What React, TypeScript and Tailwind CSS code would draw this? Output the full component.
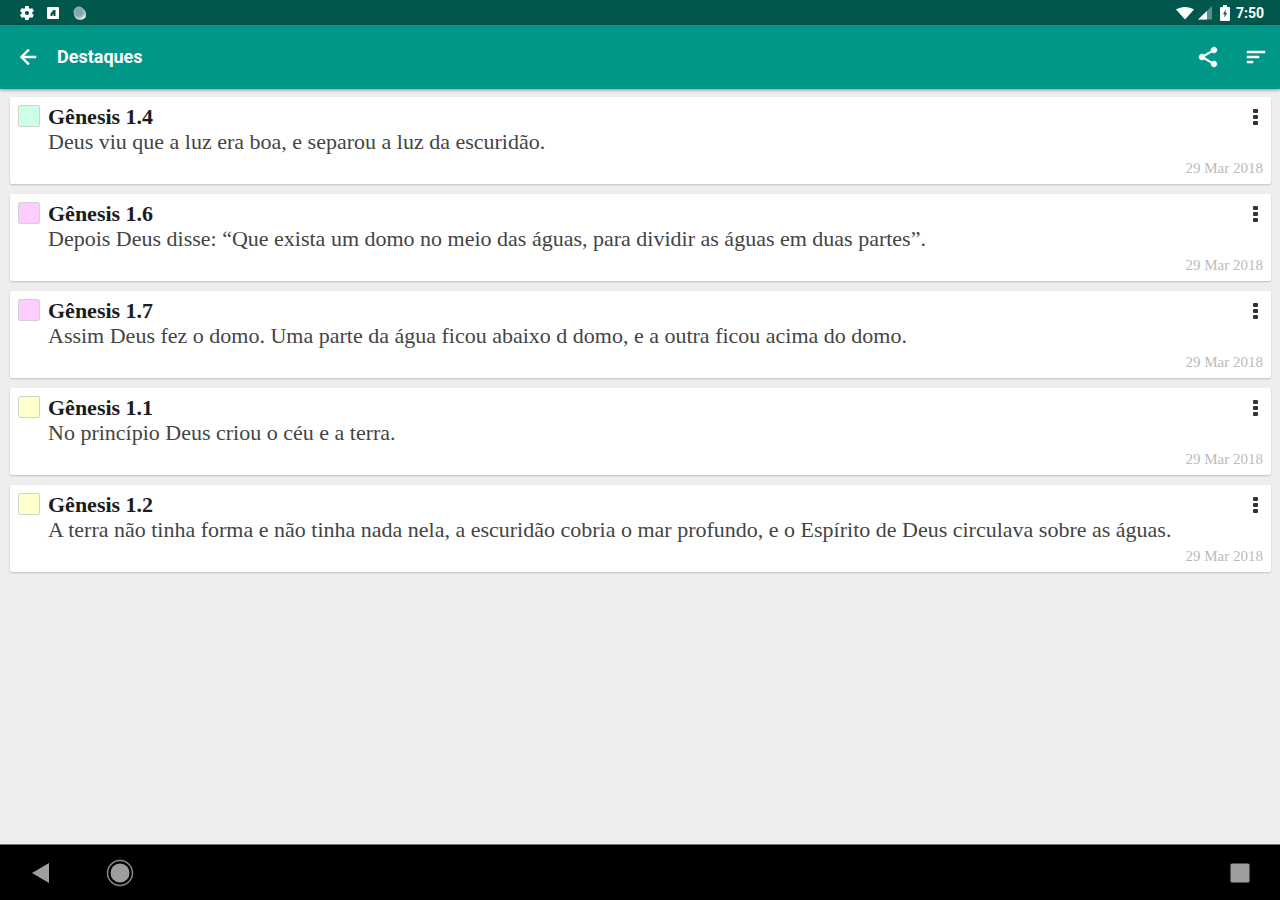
type Highlight = {
	verse: string;
	text: string;
	date: string;
	color: string;
};

const highlights: Highlight[] = [
	{
		verse: "Gênesis 1.4",
		text: "Deus viu que a luz era boa, e separou a luz da escuridão.",
		date: "29 Mar 2018",
		color: "bg-[#ccffe5]",
	},
	{
		verse: "Gênesis 1.6",
		text: "Depois Deus disse: “Que exista um domo no meio das águas, para dividir as águas em duas partes”.",
		date: "29 Mar 2018",
		color: "bg-[#ffccff]",
	},
	{
		verse: "Gênesis 1.7",
		text: "Assim Deus fez o domo. Uma parte da água ficou abaixo d domo, e a outra ficou acima do domo.",
		date: "29 Mar 2018",
		color: "bg-[#ffccff]",
	},
	{
		verse: "Gênesis 1.1",
		text: "No princípio Deus criou o céu e a terra.",
		date: "29 Mar 2018",
		color: "bg-[#ffffcc]",
	},
	{
		verse: "Gênesis 1.2",
		text: "A terra não tinha forma e não tinha nada nela, a escuridão cobria o mar profundo, e o Espírito de Deus circulava sobre as águas.",
		date: "29 Mar 2018",
		color: "bg-[#ffffcc]",
	},
];

const StatusBar = () => (
	<div className="flex h-[25px] items-center justify-between bg-[#00574b] pr-4 pl-5 text-white">
		<div className="flex items-center gap-3">
			<svg viewBox="2 2 20 20" className="h-3.5 w-3.5" fill="currentColor">
				<path d="M19.4 13c0-.3.1-.6.1-1s0-.7-.1-1l2.1-1.6c.2-.2.3-.4.1-.7l-2-3.4c-.1-.2-.4-.3-.6-.2l-2.5 1c-.5-.4-1.1-.7-1.7-1l-.4-2.6c0-.3-.2-.5-.5-.5h-4c-.2 0-.4.2-.5.4L9 5.1c-.6.2-1.1.6-1.7 1l-2.5-1c-.2-.1-.5 0-.6.2l-2 3.4c-.1.3 0 .5.2.7L4.5 11c0 .3-.1.7-.1 1s0 .7.1 1l-2.1 1.6c-.2.2-.3.4-.2.7l2 3.4c.1.2.4.3.6.2l2.5-1c.5.4 1.1.7 1.7 1l.4 2.6c0 .3.2.5.5.5h4c.2 0 .5-.2.5-.4l.4-2.7c.6-.2 1.1-.6 1.7-1l2.5 1c.2.1.5 0 .6-.2l2-3.4c.1-.2.1-.5-.1-.7L19.4 13zM12 15a3 3 0 110-6 3 3 0 010 6z" />
			</svg>
			<svg viewBox="0 0 14 14" className="h-3.5 w-3.5">
				<rect x="1" y="1" width="12" height="12" rx="1" fill="#fff" />
				<path d="M4.500 10V7.500L7.500 4H9.500v6H7.500V8.500H6.500V10z" fill="#00574b" />
			</svg>
			<svg viewBox="0 0 16 16" className="h-4 w-4">
				<circle cx="8" cy="9" r="6" fill="#b5cfcb" />
				<circle cx="7" cy="7" r="5" fill="#80aaa4" stroke="#9bbdb8" />
				<path d="M8 15l6-5-1 3z" fill="#fff" />
			</svg>
		</div>
		<div className="flex items-center gap-1">
			<svg viewBox="0 0 18 14" className="h-3.5 w-[18px]" fill="currentColor">
				<path d="M9 13.500L0 3.500C5 0 13 0 18 3.500z" />
			</svg>
			<svg viewBox="0 0 14 14" className="h-3.5 w-3.5">
				<path d="M0 13.500L14 0v13.500z" fill="#fff" opacity=".35" />
				<path d="M0 13.500L9 5v8.500z" fill="#fff" />
			</svg>
			<svg viewBox="0 0 14 16" className="ml-0.5 h-4 w-3.5">
				<path d="M5 0h4v2h2q1 0 1 1v12q0 1-1 1H3q-1 0-1-1V3q0-1 1-1h2z" fill="#fff" />
				<path d="M8 4.500L5 9h1.500v3.500L9 8H7.500z" fill="#00574b" />
			</svg>
			<span className="text-sm leading-4 font-bold">7:50</span>
		</div>
	</div>
);

const AppBar = () => (
	<header className="z-10 flex h-16 items-center bg-[#009688] pr-3 pl-4 text-white shadow-[0_1px_3px_rgba(0,0,0,0.4)]">
		<button type="button" aria-label="Voltar">
			<svg viewBox="0 0 24 24" className="h-6 w-6" fill="currentColor" stroke="currentColor" strokeWidth="0.5">
				<path d="M20 11H7.830l5.590-5.590L12 4l-8 8 8 8 1.410-1.410L7.830 13H20v-2z" />
			</svg>
		</button>
		<h1 className="ml-[17px] flex-1 text-lg font-bold">Destaques</h1>
		<button type="button" aria-label="Compartilhar">
			<svg viewBox="0 0 24 24" className="h-6 w-6" fill="currentColor" stroke="currentColor" strokeWidth="0.5">
				<path d="M18 16.080c-.76 0-1.440.3-1.960.77L8.910 12.700c.05-.23.09-.46.09-.7s-.04-.47-.09-.7l7.050-4.110c.54.5 1.250.81 2.040.81 1.660 0 3-1.340 3-3s-1.340-3-3-3-3 1.340-3 3c0 .24.04.47.09.7L8.040 9.810C7.500 9.310 6.790 9 6 9c-1.660 0-3 1.340-3 3s1.340 3 3 3c.79 0 1.500-.31 2.040-.81l7.120 4.160c-.05.21-.08.43-.08.65 0 1.610 1.310 2.920 2.920 2.920s2.920-1.310 2.920-2.920-1.310-2.920-2.920-2.920z" />
			</svg>
		</button>
		<button type="button" aria-label="Ordenar" className="ml-6">
			<svg viewBox="0 0 24 24" className="h-6 w-6" fill="currentColor" stroke="currentColor" strokeWidth="0.5">
				<path d="M3 18h6v-2H3v2zM3 6v2h18V6H3zm0 7h12v-2H3v2z" />
			</svg>
		</button>
	</header>
);

const HighlightCard = ({ verse, text, date, color }: Highlight) => (
	<li className="flex rounded-xs bg-white px-2 pt-2 pb-[6px] shadow-[0_1px_2px_rgba(0,0,0,0.2)]">
		<span className={`h-[22px] w-[22px] shrink-0 rounded-xs border border-[#d0d4d0] ${color}`} />
		<div className="ml-2 min-w-0 flex-1">
			<div className="flex items-start justify-between">
				<h2 className="text-[22px] leading-6 font-bold text-[#1c1c1c]">{verse}</h2>
				<button type="button" aria-label={`Opções de ${verse}`} className="mt-[3px]">
					<svg viewBox="0 0 16 18" className="h-[18px] w-4" fill="#333">
						<rect x="6" y="1" width="5" height="4" rx="1" />
						<rect x="6" y="7" width="5" height="4" rx="1" />
						<rect x="6" y="13" width="5" height="4" rx="1" />
					</svg>
				</button>
			</div>
			<p className="text-[22px] leading-[25px] text-[#444]">{text}</p>
			<time className="mt-1 block text-right text-[15px] leading-5 text-[#bbb]">{date}</time>
		</div>
	</li>
);

const NavBar = () => (
	<nav className="flex h-14 items-center border-t border-[#777] bg-black px-7">
		<button type="button" aria-label="Voltar">
			<svg viewBox="0 0 24 24" className="h-6 w-6" fill="#9e9e9e">
				<path d="M4 12L21 2v20z" />
			</svg>
		</button>
		<button type="button" aria-label="Início" className="ml-[54px]">
			<svg viewBox="0 0 28 28" className="h-7 w-7">
				<circle cx="14" cy="14" r="9.500" fill="#9e9e9e" />
				<circle cx="14" cy="14" r="12.500" fill="none" stroke="#8a8a8a" strokeWidth="1.500" />
			</svg>
		</button>
		<button type="button" aria-label="Recentes" className="ml-auto">
			<svg viewBox="0 0 24 24" className="h-6 w-6">
				<rect x="2.500" y="2.500" width="19" height="19" rx="1.500" fill="#9e9e9e" />
			</svg>
		</button>
	</nav>
);

const App = () => {
	return (
		<div className="flex min-h-screen flex-col bg-[#eee] font-['Roboto',sans-serif]">
			<StatusBar />
			<AppBar />
			<main className="flex-1 py-2 pr-[9px] pl-[10px]">
				<ul className="flex flex-col gap-[10px] font-['Liberation_Serif',serif]">
					{highlights.map((item) => (
						<HighlightCard key={item.verse} {...item} />
					))}
				</ul>
			</main>
			<NavBar />
		</div>
	);
};

export default App;
